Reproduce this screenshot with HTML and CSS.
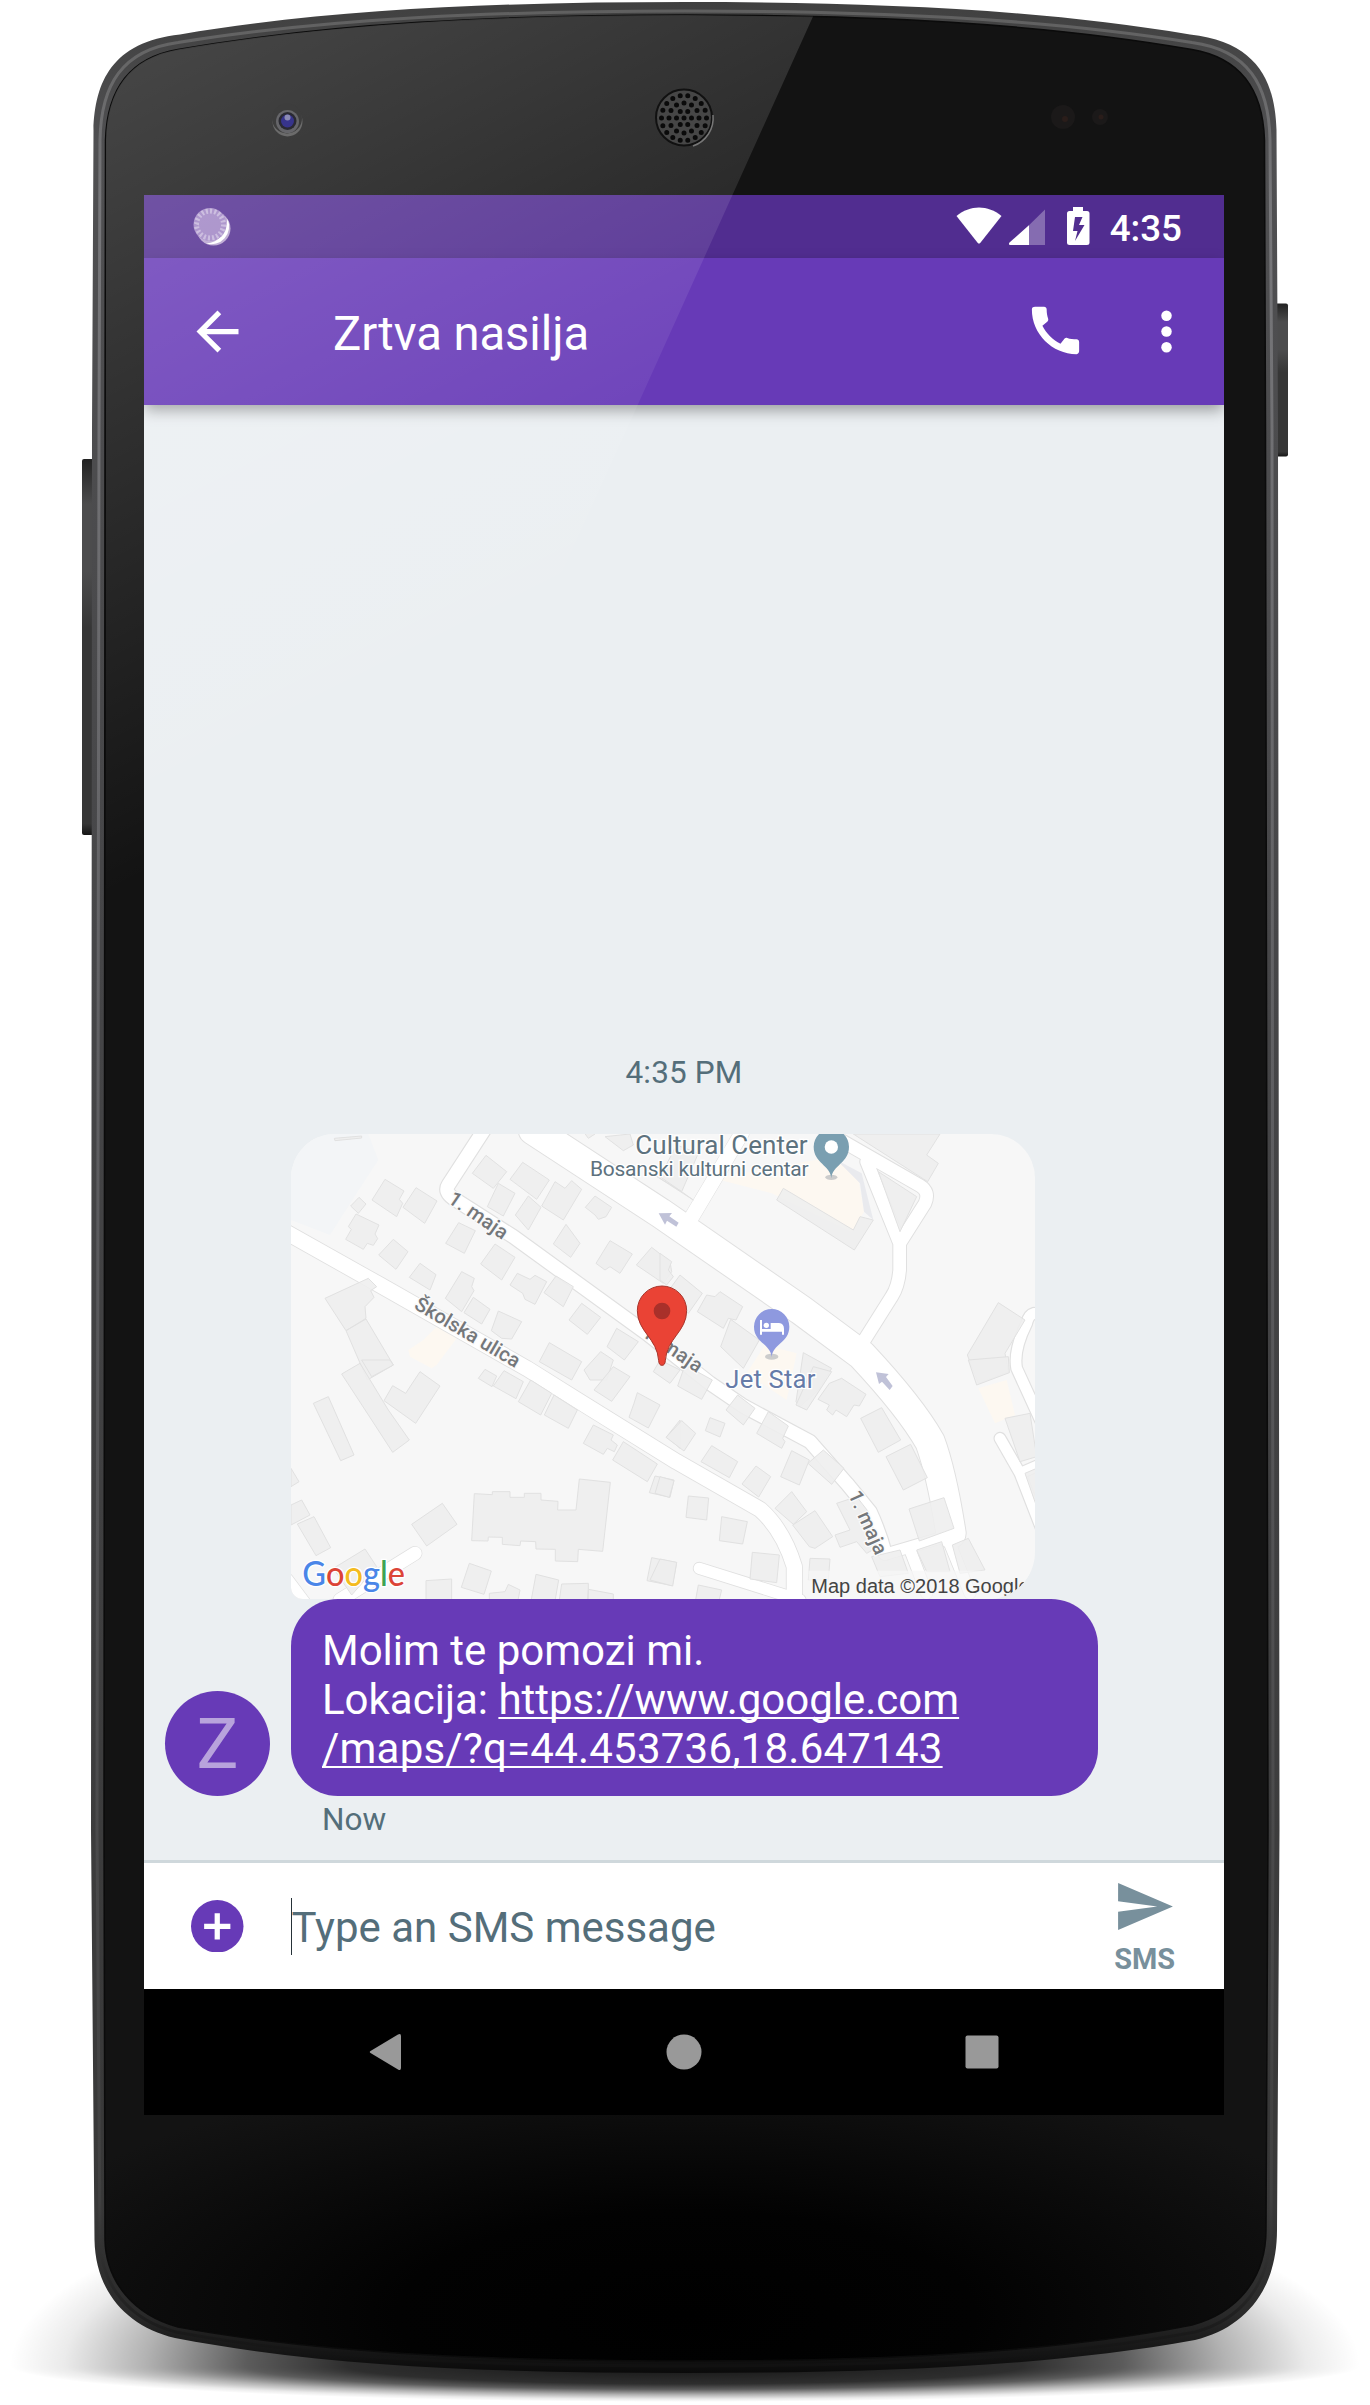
FILE: index.html
```html
<!DOCTYPE html>
<html lang="bs">
<head>
<meta charset="utf-8">
<title>Zrtva nasilja</title>
<link rel="stylesheet" href="styles.css">
</head>
<body>
<div class="device">
  <svg class="shell" viewBox="0 0 1370 2405" aria-hidden="true">
    <defs>
      <radialGradient id="shade">
        <stop offset="0" stop-opacity=".92"/><stop offset=".5" stop-opacity=".82"/><stop offset=".65" stop-opacity=".64"/><stop offset=".8" stop-opacity=".3"/><stop offset=".92" stop-opacity=".08"/><stop offset="1" stop-opacity="0"/>
      </radialGradient>
      <linearGradient id="rim" x1="0" y1="0" x2="0" y2="1">
        <stop offset="0" stop-color="#404040"/><stop offset=".06" stop-color="#505052"/><stop offset=".4" stop-color="#464648"/><stop offset=".93" stop-color="#383838"/><stop offset=".975" stop-color="#2a2a2a"/><stop offset="1" stop-color="#0a0a0a"/>
      </linearGradient>
      <linearGradient id="shine" x1="0" y1="0" x2="0" y2="1">
        <stop offset="0" stop-color="#606060"/><stop offset=".08" stop-color="#77777a"/><stop offset=".5" stop-color="#5c5c5f"/><stop offset=".93" stop-color="#404040"/><stop offset="1" stop-color="#111"/>
      </linearGradient>
      <radialGradient id="dark" gradientTransform="translate(.5 .98) scale(.62 .11)" cx="0" cy="0" r="1">
        <stop offset="0" stop-color="#000"/><stop offset=".4" stop-color="#020202"/><stop offset="1" stop-color="#131313"/>
      </radialGradient>
      <linearGradient id="key" x1="0" y1="0" x2="0" y2="1">
        <stop offset="0" stop-color="#222"/><stop offset=".12" stop-color="#4c4c4d"/><stop offset=".3" stop-color="#4c4c4d"/><stop offset=".45" stop-color="#363636"/><stop offset=".97" stop-color="#363636"/><stop offset="1" stop-color="#151515"/>
      </linearGradient>
      <clipPath id="above"><rect x="0" y="2100" width="1370" height="266"/></clipPath>
      <clipPath id="below"><rect x="0" y="2366" width="1370" height="39"/></clipPath>
    </defs>
    <ellipse cx="685" cy="2366" rx="675" ry="200" fill="url(#shade)" clip-path="url(#above)"/>
    <ellipse cx="685" cy="2366" rx="675" ry="36" fill="url(#shade)" clip-path="url(#below)"/>
    <rect x="82" y="459" width="14" height="376" rx="2" fill="url(#key)"/>
    <rect x="1274" y="303.500" width="14" height="153" rx="2" fill="url(#key)"/>
    <path fill="url(#rim)" d="M92 430L93.500 130C95 82 112 42 180 34.500C330 9 500 2 685 2S1040 9 1190 34.500C1258 42 1275 82 1276.500 130L1278 430L1279.500 1830L1277 2230C1277 2290 1245 2328 1195 2340C1040 2368 860 2373 685 2373S330 2368 175 2338C125 2326 95.500 2290 94.500 2240L91 1830Z"/>
    <path fill="none" stroke="url(#shine)" stroke-width="3" d="M99 430L100 140C101 85 122 50 178 42.500C330 18 500 11 685 11S1040 18 1192 42.500C1248 50 1269 85 1270 140L1272 430L1273 1830L1271 2230C1270 2286 1240 2320 1195 2332C1040 2361 860 2366 685 2366S330 2361 176 2332C130 2320 101 2286 100 2240L97 1830Z"/>
    <path fill="url(#dark)" stroke="#0b0b0b" stroke-width="1.500" d="M105 430L105.500 140C107 92 128 58 178 49.500C330 23 500 15 685 15S1040 23 1192 49.500C1242 58 1263 92 1264.500 140L1265.500 430L1268 1830L1266 2230C1266 2280 1236 2313 1192 2325C1040 2355 860 2361 685 2361S330 2355 178 2327C134 2315 106 2282 105 2240L104 1830Z"/>
    <circle cx="1063" cy="117" r="12" fill="#1b1919"/><circle cx="1065" cy="119" r="3" fill="#2a1d1a"/>
    <circle cx="1100" cy="117" r="8" fill="#1b1919"/><circle cx="1101" cy="117" r="2.500" fill="#2a1d1a"/>
  </svg>

  <main class="screen">
    <header class="status">
      <svg class="sync" viewBox="0 0 42 42">
        <circle cx="22.500" cy="22.500" r="17" fill="#b7a2cf"/>
        <path d="M36.600 13A18 18 0 0 1 15 37.500C29 36 34 28 36.600 13Z" fill="#fff"/>
        <circle cx="19" cy="18.500" r="16.500" fill="#9f84c4"/>
        <circle cx="19" cy="18.500" r="13.500" fill="none" stroke="#c3b2da" stroke-width="5" pathLength="40" stroke-dasharray="1 1"/>
      </svg>
      <svg class="indicators" viewBox="0 0 134 40" fill="#fff">
        <path d="M.500 9C14-2.500 32-2.500 45.500 9L24.200 36Q23 37.200 21.800 36Z"/>
        <path d="M89 2.500V38H53Z" fill="#fff" fill-opacity=".3"/><path d="M73 18.300V38H54.500Q52 38 53.500 35.500Z"/>
        <path fill-rule="evenodd" d="M117 0h10v4h4q2.500 0 2.500 2.500V36q0 2-2.500 2h-17.500q-2.500 0-2.500-2V6.500Q111 4 113.500 4H117zM119 10l-2 14h4.500l-2.500 10 9.500-16h-5.500l3.500-8z"/>
      </svg>
      <span class="clock">4:35</span>
    </header>
    <div class="appbar">
      <svg class="icon" viewBox="0 0 24 24"><path d="M20 11H7.830l5.590-5.590L12 4l-8 8 8 8 1.410-1.410L7.830 13H20z"/></svg>
      <h1 class="title">Zrtva nasilja</h1>
      <svg class="icon call" viewBox="0 0 24 24"><path d="M20.010 15.380c-1.230 0-2.420-.2-3.530-.56-.35-.12-.74-.03-1.010.24l-1.570 1.970c-2.830-1.350-5.480-3.900-6.890-6.830l1.950-1.660c.27-.28.35-.67.24-1.020-.37-1.110-.56-2.300-.56-3.530 0-.54-.45-.99-.99-.99H4.190C3.650 3 3 3.240 3 3.990 3 13.280 10.730 21 20.010 21c.71 0 .99-.63.99-1.180v-3.450c0-.54-.45-.99-.99-.99z"/></svg>
      <svg class="icon" viewBox="0 0 24 24"><circle cx="12" cy="6" r="2"/><circle cx="12" cy="12" r="2"/><circle cx="12" cy="18" r="2"/></svg>
    </div>

    <section class="chat">
      <time class="stamp">4:35 PM</time>
      <div class="message">
        <div class="avatar">Z</div>
        <div class="content">
          <svg class="map" viewBox="33 42 2232 1395">
            <defs>
              <g id="roads">
                <path d="M760 30L1140 278L1560 568L1745 705Q1890 860 1950 965Q1985 1060 2013 1240" stroke-width="88"/>
                <path d="M625 10L505 195Q492 215 520 235L700 350L1100 640L1290 790L1390 858L1590 965L1700 1090L1770 1175Q1800 1240 1815 1300" stroke-width="40"/>
                <path d="M10 332L300 495L740 745L900 845L1190 1025L1440 1168Q1510 1230 1543 1340V1450" stroke-width="46"/>
                <path d="M1235 292L1385 40" stroke-width="44"/>
                <path d="M1690 65L1920 197Q1950 215 1935 250L1859 370V450Q1855 500 1835 530L1750 665M1760 125L1859 370" stroke-width="38"/>
                <path d="M2262 580Q2245 585 2240 610Q2200 690 2210 745L2290 920M2160 955L2220 1060L2300 1025M2220 1060L2290 1240" stroke-width="32"/>
                <path d="M1258 1345L1560 1440M1825 1300L2030 1240M1890 1290L1940 1420M2005 1260L2070 1420" stroke-width="34"/>
                <path d="M405 1300L180 1440M20 1380L80 1460" stroke-width="40"/>
              </g>
            </defs>
            <rect x="33" y="42" width="2232" height="1395" fill="#f7f7f7"/>
            <path fill="#f3f5f7" d="M33 42H265L295 120L230 220L150 345L33 300Z"/>
            <path fill="#fdf8f1" d="M1300 175L1660 110L1735 175L1752 275L1715 335L1475 220ZM385 690L430 660L470 620L530 655L470 735L455 745L390 710ZM1455 675L1550 700L1520 840L1400 760ZM2095 805L2180 780L2205 885L2145 910Z"/>
            <g fill="none" stroke-linecap="round" stroke-linejoin="round">
              <path d="M760 30L1140 278L1560 568L1745 705Q1890 860 1950 965Q1985 1060 2013 1240" stroke="#e0e0e0" stroke-width="94"/>
              <path d="M625 10L505 195Q492 215 520 235L700 350L1100 640L1290 790L1390 858L1590 965L1700 1090L1770 1175Q1800 1240 1815 1300M1235 292L1385 40" stroke="#e0e0e0" stroke-width="47"/>
              <path d="M10 332L300 495L740 745L900 845L1190 1025L1440 1168Q1510 1230 1543 1340V1450" stroke="#e0e0e0" stroke-width="51"/>
              <path d="M1690 65L1920 197Q1950 215 1935 250L1859 370V450Q1855 500 1835 530L1750 665M1760 125L1859 370M405 1300L180 1440M20 1380L80 1460" stroke="#e0e0e0" stroke-width="44"/>
              <path d="M2262 580Q2245 585 2240 610Q2200 690 2210 745L2290 920M2160 955L2220 1060L2300 1025M2220 1060L2290 1240M1258 1345L1560 1440M1825 1300L2030 1240M1890 1290L1940 1420M2005 1260L2070 1420" stroke="#e0e0e0" stroke-width="39"/>
              <use href="#roads" stroke="#fff"/>
            </g>
            <g class="blocks">
              <path d="M163 55L245 48V54L165 62ZM618 106L680 155L640 205L577 160ZM728 127L808 180L770 238L690 178ZM655 190L705 220L670 288L622 260ZM745 228L783 262L745 330L706 285ZM825 185L855 205L875 182L905 208L850 300L785 258ZM315 178L372 213L358 238L368 250L350 290L276 240ZM408 203L471 243L434 310L369 262ZM237 232L258 252L235 280L212 258ZM228 282L297 315L285 342L293 356L280 376L262 370L250 388L197 358L214 328L205 320ZM536 308L586 332L553 400L497 370ZM340 358L384 395L348 448L296 405ZM645 372L705 412L665 480L602 432ZM420 430L468 464L450 510L388 472ZM545 455L583 475L575 500L582 512L545 575L496 535ZM712 460L750 478L765 466L800 485L765 553L735 538L728 520L690 495ZM828 468L880 500L850 560L792 518ZM580 532L630 568L605 612L552 578ZM655 573L725 605L695 657L665 655L634 632ZM905 550L962 592L922 643L867 600ZM1010 625L1075 665L1033 720L981 680ZM945 228L995 262L978 290L955 298L945 285L916 262ZM858 313L900 370L872 412L820 372ZM990 362L1057 402L1020 460L990 440L975 450L948 430ZM1115 382L1170 425L1175 455L1150 490L1069 435ZM135 535L265 475L290 500L272 512L282 532L255 560L258 595L198 632ZM198 632L258 597L340 735L262 780ZM808 668L905 725L875 780L778 725ZM962 695L1000 720L980 780L930 780L912 750ZM900 20L945 42L925 55ZM975 50L1050 42L1060 75L1030 92ZM1100 150L1240 240L1205 215ZM1190 75L1255 100L1205 215L1140 170Z"/>
              <g transform="translate(1140)"><path d="M580 42H840L800 105L835 130L803 185ZM370 205L580 330L600 290L640 300L583 390L350 240ZM60 465L127 520L85 580L20 520ZM180 515L248 560L228 600L205 595L190 625L112 575L140 525L165 530ZM212 598L298 660L250 745L182 680ZM430 698L515 745L475 810L420 860L408 845ZM1015 548L1095 600L1035 700L1045 755L955 790L922 705ZM0 400L35 425L25 450L40 470L20 495L0 480ZM655 155L770 230L720 335Z"/></g>
              <g transform="translate(0 720)"><path d="M185 42L240 10L325 150L388 240L338 277L275 180ZM245 0H330L340 15L275 50ZM420 35L480 78L407 190L312 122L338 77L377 100ZM100 130L145 110L222 285L182 302ZM33 325L57 365L33 380ZM33 435L65 420L90 465L33 495ZM52 492L102 470L152 563L108 587ZM487 430L531 493L440 558L395 493ZM160 625L255 567L290 620L215 705ZM583 401L637 404V395H690V412H733V400H783V420L834 424L833 450H888L898 357L991 367L968 574L895 568L893 605L826 603V568L768 567L767 545L722 543L720 557L667 553V532L625 531L624 543L575 542ZM615 28L650 48L636 80L595 55ZM672 32L730 65L708 116L640 78ZM752 60L815 100L782 165L715 125ZM822 105L892 150L865 205L793 165ZM1000 20L1050 50L995 124L942 90ZM1072 98L1140 135L1105 204L1047 172L1062 130ZM940 195L1000 225L993 240L1012 255L1003 275L982 265L970 283L910 250ZM1030 245L1132 312L1102 365L998 300ZM1125 348L1182 360L1170 412L1108 398ZM1200 180V265L1160 230ZM1115 593L1190 608L1177 677L1101 662ZM568 610L634 633L612 703L544 682ZM438 662L515 657V740H438ZM768 643L836 660L822 740H750ZM845 672L925 670V740H835ZM925 688L1000 702V740H920ZM628 700L675 695L685 673L720 690L710 740H628Z"/></g>
              <g transform="translate(1140 720)"><path d="M0 0L60 30L30 70L-20 35ZM75 15L157 60L125 118L53 78ZM233 105L285 145L250 195L198 150ZM65 182L107 220L72 273L18 232ZM150 173L195 190L180 231L136 212ZM325 155L385 198L368 235L375 245L365 265L290 220ZM155 257L233 305L208 353L123 305ZM395 272L448 300L418 375L362 350ZM490 270L552 325L515 373L444 310ZM288 318L332 350L296 411L246 372ZM0 350L42 362L28 412L-15 400ZM85 408L146 414L140 480L78 472ZM185 470L262 485L248 552L178 542ZM395 395L440 455L400 493L345 445ZM465 452L518 530L465 565L448 560L398 495ZM530 430L590 410L625 455L655 560L620 580L590 545L540 562L525 525L570 510ZM450 595L510 597L505 660H445ZM277 577L358 585L350 668L270 657ZM0 597L50 607L38 678L-30 660ZM115 675L185 690L175 730H105ZM460 20L515 35L440 150L408 135ZM545 55L618 103L598 138L582 135L560 170L528 150L518 165L500 150L508 135L474 118L508 70ZM665 143L722 240L655 277L602 175ZM752 253L802 353L730 390L678 290ZM747 447L852 413L882 505L778 543ZM770 570L845 545L870 635H800ZM877 555L925 535L975 630L900 640ZM925 0L1045 -10L1048 38L950 75ZM1035 175L1110 160L1130 290L1080 305ZM1095 340L1130 325V440ZM635 590L720 570L745 640L660 650Z"/></g>
            </g>
            <path fill="#e9eaee" d="M1670 120L1745 160L1780 300L1752 275L1740 190Z"/>
            <path fill="#c0c2d8" d="M1136 280L1176 279L1168 289L1196 308L1189 320L1161 302L1155 314ZM1788 757L1826 762L1818 771L1838 798L1829 810L1806 785L1797 792Z"/>
            <g class="place">
              <text x="1066" y="102" font-size="78" textLength="517">Cultural Center</text>
              <text x="930" y="168" font-size="63" textLength="656">Bosanski kulturni centar</text>
              <text class="hotel" x="1336" y="805" font-size="77" textLength="270">Jet Star</text>
            </g>
            <g class="street">
              <text transform="translate(500 245) rotate(34.500)" textLength="203">1. maja</text>
              <text transform="translate(399 564) rotate(30.500)" textLength="356">Školska ulica</text>
              <text transform="translate(1083 646) rotate(34)" textLength="203">1. maja</text>
              <text transform="translate(1704 1123) rotate(66)" textLength="203">1. maja</text>
            </g>
            <ellipse cx="1654" cy="172" rx="18" ry="8" fill="#ccc"/>
            <path fill="#7a9fb1" d="M1654 175C1652 135 1601 130 1601 80A53 53 0 0 1 1707 80C1707 130 1656 135 1654 175Z"/><circle cx="1654" cy="81" r="20" fill="#fff"/>
            <ellipse cx="1475" cy="710" rx="20" ry="9" fill="#ccc"/>
            <path fill="#8e99df" d="M1475 712C1473 672 1422 668 1422 620A53 53 0 0 1 1528 620C1528 668 1477 672 1475 712Z"/>
            <g fill="#fff"><path d="M1440 600h6v27h26v-18h25q15 2 15 18v17h-6v-9h-60v9h-6z"/><circle cx="1459" cy="616" r="8"/></g>
            <path fill="#ea4335" stroke="#a8352c" stroke-width="3" d="M1146 736Q1137 736 1136 722C1132 655 1072 635 1072 572A74 74 0 0 1 1220 572C1220 635 1160 655 1156 722Q1155 736 1146 736Z"/>
            <circle cx="1146" cy="573" r="25" fill="#a9302a"/>
            <text class="google" x="67" y="1399" textLength="308" lengthAdjust="spacingAndGlyphs"><tspan fill="#4a86e8">G</tspan><tspan fill="#dc4437">o</tspan><tspan fill="#f4bb20">o</tspan><tspan fill="#4a86e8">g</tspan><tspan fill="#3da454">l</tspan><tspan fill="#dc4437">e</tspan></text>
            <rect x="1585" y="1352" width="680" height="85" fill="#f7f7f7" fill-opacity=".75"/>
            <text class="credit" x="1594" y="1418">Map data ©2018 Google</text>
          </svg>
          <p class="bubble">Molim te pomozi mi.<br>Lokacija: <span class="link">https://www.google.com<br><span class="query">/maps/?q=44.453736,18.647143</span></span></p>
        </div>
      </div>
      <p class="sent">Now</p>
    </section>

    <footer class="compose">
      <svg class="add" viewBox="0 0 20 20"><circle cx="10" cy="10" r="10" fill="#673ab7"/><path d="M5 9h4V5h2v4h4v2h-4v4H9v-4H5z" fill="#fff"/></svg>
      <div class="field">Type an SMS message</div>
      <div class="send">
        <svg viewBox="2 3 21 18"><path d="M2.010 21L23 12 2.010 3 2 10l15 2-15 2z"/></svg>
        <span>SMS</span>
      </div>
    </footer>
    <nav class="navbar">
      <svg viewBox="0 0 36 36"><path d="M2.500 17Q1 18 2.500 19L30 35.500Q33 37 33 34V2Q33-1 30 .500Z"/></svg>
      <svg viewBox="0 0 36 36"><circle cx="18" cy="18" r="17.500"/></svg>
      <svg viewBox="0 0 36 36"><rect x="1.500" y="1.500" width="33" height="33" rx="2"/></svg>
    </nav>
  </main>

  <svg class="glare" viewBox="0 0 1370 2405" aria-hidden="true">
    <defs><linearGradient id="glare" gradientUnits="userSpaceOnUse" x1="100" y1="50" x2="440" y2="730"><stop offset="0" stop-color="#fff" stop-opacity=".22"/><stop offset="1" stop-color="#fff" stop-opacity="0"/></linearGradient></defs>
    <path fill="url(#glare)" d="M813 16.500L500 710L106 900V140C107 92 128 58 178 49.500C330 23 500 15 685 15Z"/>
    <circle cx="684" cy="117.500" r="28" fill="#464646" stroke="#111" stroke-width="2"/>
    <path d="M693 146A29.500 29.500 0 0 0 713 115" fill="none" stroke="#777" stroke-width="1.500"/>
    <g fill="none" stroke="#0a0a0a" stroke-width="5" stroke-linecap="round">
      <circle cx="684" cy="118" r="7.500" pathLength="6" stroke-dasharray="0 1"/>
      <circle cx="684" cy="118" r="15" pathLength="12" stroke-dasharray="0 1"/>
      <circle cx="684" cy="118" r="22.500" pathLength="18" stroke-dasharray="0 1"/>
      <path d="M684 118h.010"/>
    </g>
    <circle cx="287.500" cy="121.500" r="15" fill="#6b6b6b"/><circle cx="287" cy="118.500" r="15" fill="#3d3d3d"/>
    <circle cx="287.500" cy="121.500" r="11.500" fill="#66666a"/><circle cx="287.500" cy="121" r="9" fill="#2a2a33"/><circle cx="287.500" cy="121" r="6.500" fill="#37348c"/><circle cx="287.500" cy="117.500" r="3" fill="#8b8bb5"/>
  </svg>
</div>
</body>
</html>
```
FILE: styles.css
```css
* { box-sizing: border-box; }

body {
  margin: 0;
  background: #fff;
  font-family: Roboto, "Liberation Sans", sans-serif;
}

h1, p { margin: 0; }

.device {
  position: relative;
  width: 1370px;
  height: 2405px;
  padding: 195px 146px 290px 144px;
  overflow: hidden;
}

.shell, .glare {
  position: absolute;
  top: 0;
  left: 0;
  width: 1370px;
  height: 2405px;
}

.glare { z-index: 3; }

.screen {
  position: relative;
  z-index: 1;
  display: flex;
  flex-direction: column;
  width: 1080px;
  height: 1920px;
  overflow: hidden;
  background: #ebeff2;
}

.status {
  display: flex;
  align-items: center;
  height: 63px;
  padding: 0 42px 0 47px;
  background: #512d90;
}

.sync { width: 42px; height: 42px; margin-top: 1px; }
.indicators { width: 134px; height: 40px; margin: 0 20px 0 auto; }

.clock {
  color: #fff;
  font-size: 36.75px;
  font-weight: 500;
  line-height: 63px;
  padding-top: 3px;
}

.appbar {
  position: relative;
  z-index: 2;
  display: flex;
  align-items: center;
  flex: none;
  height: 147px;
  padding: 0 26px 0 42px;
  background: #673ab7;
  box-shadow: 0 6px 14px -1px rgba(0, 0, 0, .36);
}

.icon { flex: none; width: 63px; height: 63px; fill: #fff; }
.call { margin: -2px 48px 0 auto; }

.title {
  margin-left: 84px;
  padding-top: 4px;
  color: #fff;
  font-size: 47.25px;
  font-weight: 400;
  letter-spacing: -.08px;
  white-space: nowrap;
}

.chat {
  display: flex;
  flex: 1;
  flex-direction: column;
  justify-content: flex-end;
  padding: 0 21px 22px;
}

.stamp, .sent {
  color: #546e7a;
  font-size: 31.5px;
  line-height: 37px;
}

.stamp { align-self: center; margin-bottom: 43px; letter-spacing: .15px; }
.sent { margin: 5px 0 0 157px; }

.message {
  display: grid;
  grid-template-columns: 105px 807px;
  column-gap: 21px;
  align-items: end;
}

.avatar {
  height: 105px;
  border-radius: 50%;
  background: #673ab7;
  color: #b8a3dc;
  font-size: 70px;
  line-height: 106px;
  text-align: center;
}

.map {
  display: block;
  width: 744px;
  height: 465px;
  border-radius: 44px 44px 47px 12px;
}

.blocks {
  fill: #eee;
  fill-opacity: .88;
  stroke: #e1e1e1;
  stroke-width: 3;
}

.place { fill: #5d727e; stroke: #fff; stroke-width: 8px; paint-order: stroke; }
.place .hotel { fill: #667ba8; }

.street {
  fill: #74777a;
  stroke: #fafafa;
  stroke-width: 8px;
  paint-order: stroke;
  font-size: 60px;
  font-weight: 500;
}

.google { font: 500 104px Lato, sans-serif; stroke: #fff; stroke-width: 8px; paint-order: stroke; }
.credit { fill: #444; font: 60px "Liberation Sans", sans-serif; }

.bubble {
  height: 197px;
  padding: 27px 31px 0;
  border-radius: 47px;
  background: #673ab7;
  color: #fff;
  font-size: 42px;
  line-height: 49px;
  white-space: nowrap;
}

.link {
  text-decoration: underline 2px;
  text-underline-offset: 3px;
  text-decoration-skip-ink: none;
}

.query { letter-spacing: .22px; }

.compose {
  display: flex;
  align-items: center;
  flex: none;
  height: 129px;
  padding: 0 49px 0 47px;
  border-top: 3px solid #cfd8dc;
  background: #fff;
  color: #546e7a;
}

.add { width: 52.5px; height: 52.5px; }

.field {
  display: flex;
  align-items: center;
  height: 57px;
  margin-left: 47px;
  padding-top: 2px;
  border-left: 1px solid #263238;
  font-size: 42px;
}

.send {
  display: flex;
  flex-direction: column;
  align-items: center;
  margin-left: auto;
  padding-top: 6px;
  color: #78909c;
  font-size: 28.9px;
  font-weight: 700;
  line-height: 34px;
}

.send svg { width: 55px; height: 47px; margin: 0 0 12px 2px; fill: currentColor; }

.navbar {
  display: flex;
  align-items: center;
  flex: none;
  justify-content: center;
  gap: 262px;
  height: 126px;
  padding-right: 1px;
  background: #000;
}

.navbar svg { width: 36px; height: 36px; fill: #999; }
```
